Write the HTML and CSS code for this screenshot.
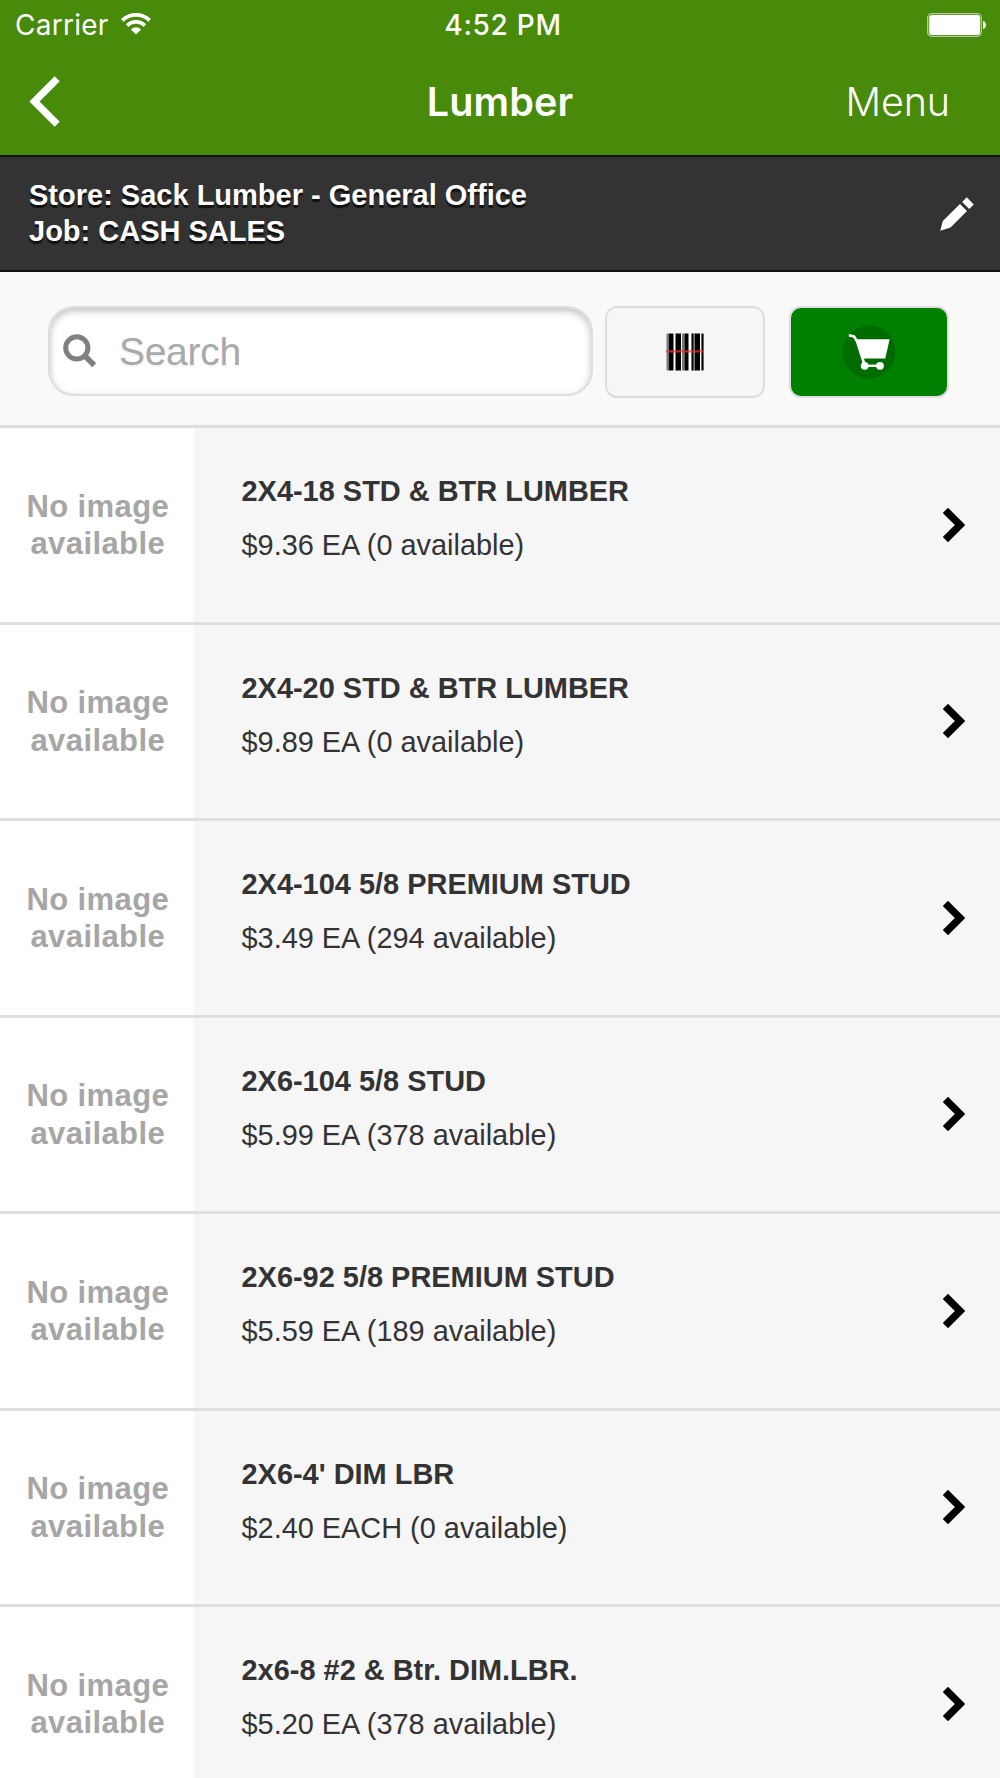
FILE: index.html
```html
<!DOCTYPE html>
<html lang="en">
<head>
<meta charset="utf-8">
<title>Lumber</title>
<link rel="stylesheet" href="styles.css">
</head>
<body>
<header class="top">
  <div class="status">
    <div class="carrier"><span>Carrier</span>
      <svg class="wifi" width="30" height="22" viewBox="0 0 30 22"><g fill="none" stroke="#fff" stroke-width="3.8"><path d="M1.3 7.4a19.5 19.5 0 0 1 27.4 0"/><path d="M6.1 12.6a12.6 12.6 0 0 1 17.8 0"/></g><path d="M15 21.5L9.9 16.4a7.3 7.3 0 0 1 10.2 0z" fill="#fff"/></svg>
    </div>
    <span class="time">4:52 PM</span>
    <svg class="battery" width="60" height="24" viewBox="0 0 60 24"><rect x=".7" y=".7" width="53.6" height="22.6" rx="4" fill="none" stroke="#fff" stroke-opacity=".6" stroke-width="1.3"/><rect x="2.2" y="2" width="50.8" height="20" rx="2.5" fill="#fff"/><path d="M56 8c4 1 4 7 0 8z" fill="#fff"/></svg>
  </div>
  <nav class="nav">
    <svg class="back" width="31" height="51" viewBox="0 0 31 51"><path d="M28.2 2.8L5.5 25.5l22.7 22.7" fill="none" stroke="#fff" stroke-width="7.2"/></svg>
    <h1 class="heading">Lumber</h1>
    <span class="menu">Menu</span>
  </nav>
</header>
<section class="store">
  <div class="store-text"><div>Store: Sack Lumber - General Office</div><div>Job: CASH SALES</div></div>
  <svg class="pencil" width="34" height="34" viewBox="0 0 34 34" fill="#fff"><path d="M20 7l7 7-16.5 16.5L.2 33.7l2.6-9.8zM22.2 5L26.7.3l7.1 7.1-4.6 4.6z"/></svg>
</section>
<section class="tools">
  <label class="search">
    <svg width="34" height="34" viewBox="0 0 34 34" fill="none" stroke="#808080"><circle cx="13.8" cy="13.8" r="11.1" stroke-width="5"/><path d="M21 21l10.2 10.2" stroke-width="5.6"/></svg>
    <input type="text" placeholder="Search">
  </label>
  <button class="scan" aria-label="Scan">
    <svg width="40" height="40" viewBox="0 0 40 40"><path fill="#fff" d="M1 1h38v38H1z"/><path fill="#777" d="M1.5 1.5h2.5v37H1.5zM17 1.5h3.3v37H17zM26 1.5h4.5v37H26z"/><path fill="#000" d="M4 1.5h4.5v37H4zM10.5 1.5h5.5v37h-5.5zM19.8 1.5h3.7v37h-3.7zM27 1.5h1.3v37H27zM30 1.5h5v37h-5zM36.4 1.5h2.2v37h-2.2z"/><path fill="#e33" fill-opacity=".7" d="M1 18.2h38v2.4H1z"/></svg>
  </button>
  <button class="cart" aria-label="Cart">
    <svg width="54" height="54" viewBox="0 0 54 54"><circle cx="27" cy="27" r="26.5" fill="#006c00"/><path d="M6.8 10.2l5.2 1.2 3 5L22 38" fill="none" stroke="#fff" stroke-width="2.6"/><path d="M13.6 14.3h34l-4.3 19.2H20.2z" fill="#fff"/><path d="M22 40.8h16" stroke="#fff" stroke-width="2.4"/><circle cx="22.7" cy="40.8" r="3.9" fill="#fff"/><circle cx="38" cy="40.8" r="3.9" fill="#fff"/></svg>
  </button>
</section>
<main class="list">
  <article class="row"><div class="thumb">No image<br>available</div><div class="info"><h2 class="name">2X4-18 STD &amp; BTR LUMBER</h2><p class="price">$9.36 EA (0 available)</p></div><svg class="go" width="22" height="34" viewBox="0 0 22 34"><path d="M2.4 2.4L17 17 2.4 31.6" fill="none" stroke="#000" stroke-width="7.4"/></svg></article>
  <article class="row"><div class="thumb">No image<br>available</div><div class="info"><h2 class="name">2X4-20 STD &amp; BTR LUMBER</h2><p class="price">$9.89 EA (0 available)</p></div><svg class="go" width="22" height="34" viewBox="0 0 22 34"><path d="M2.4 2.4L17 17 2.4 31.6" fill="none" stroke="#000" stroke-width="7.4"/></svg></article>
  <article class="row"><div class="thumb">No image<br>available</div><div class="info"><h2 class="name">2X4-104 5/8 PREMIUM STUD</h2><p class="price">$3.49 EA (294 available)</p></div><svg class="go" width="22" height="34" viewBox="0 0 22 34"><path d="M2.4 2.4L17 17 2.4 31.6" fill="none" stroke="#000" stroke-width="7.4"/></svg></article>
  <article class="row"><div class="thumb">No image<br>available</div><div class="info"><h2 class="name">2X6-104 5/8 STUD</h2><p class="price">$5.99 EA (378 available)</p></div><svg class="go" width="22" height="34" viewBox="0 0 22 34"><path d="M2.4 2.4L17 17 2.4 31.6" fill="none" stroke="#000" stroke-width="7.4"/></svg></article>
  <article class="row"><div class="thumb">No image<br>available</div><div class="info"><h2 class="name">2X6-92 5/8 PREMIUM STUD</h2><p class="price">$5.59 EA (189 available)</p></div><svg class="go" width="22" height="34" viewBox="0 0 22 34"><path d="M2.4 2.4L17 17 2.4 31.6" fill="none" stroke="#000" stroke-width="7.4"/></svg></article>
  <article class="row"><div class="thumb">No image<br>available</div><div class="info"><h2 class="name">2X6-4' DIM LBR</h2><p class="price">$2.40 EACH (0 available)</p></div><svg class="go" width="22" height="34" viewBox="0 0 22 34"><path d="M2.4 2.4L17 17 2.4 31.6" fill="none" stroke="#000" stroke-width="7.4"/></svg></article>
  <article class="row"><div class="thumb">No image<br>available</div><div class="info"><h2 class="name">2x6-8 #2 &amp; Btr. DIM.LBR.</h2><p class="price">$5.20 EA (378 available)</p></div><svg class="go" width="22" height="34" viewBox="0 0 22 34"><path d="M2.4 2.4L17 17 2.4 31.6" fill="none" stroke="#000" stroke-width="7.4"/></svg></article>
</main>
</body>
</html>
```
FILE: styles.css
```css
* { box-sizing: border-box; }
html, body { margin: 0; height: 1778px; overflow: hidden; }
body {
  width: 1000px;
  background: #f9f9f9;
  color: #333;
  font-family: "Liberation Sans", Arial, sans-serif;
}
svg { display: block; flex: none; }
h1, h2, p { margin: 0; }

.top { height: 155px; background: #488a0a; color: #fff; font-family: Inter, sans-serif; }
.status {
  display: grid;
  grid-template-columns: 1fr auto 1fr;
  align-items: center;
  height: 50px;
  padding: 0 13px 0 15px;
  font-size: 28px;
}
.carrier { display: flex; align-items: center; gap: 12px; letter-spacing: 0.25px; }
.wifi { margin-bottom: 3px; }
.time { font-weight: 500; letter-spacing: 0.7px; padding-left: 4px; }
.battery { justify-self: end; }
.nav {
  display: grid;
  grid-template-columns: 1fr auto 1fr;
  align-items: center;
  height: 103px;
  padding: 0 50px 0 29px;
  font-size: 39.5px;
}
.heading { font-size: 39.5px; font-weight: 600; letter-spacing: 0.1px; margin-left: 21px; }
.menu { justify-self: end; font-weight: 300; letter-spacing: -0.1px; }

.store {
  display: flex;
  justify-content: space-between;
  align-items: center;
  height: 117px;
  padding: 0 26px 0 29px;
  background: #333;
  border-top: 2px solid #111;
  border-bottom: 2px solid #111;
  color: #fff;
  font-size: 29px;
  font-weight: 700;
  line-height: 36px;
  text-shadow: 0 3px 1px #111;
}
.store-text { padding-bottom: 2px; }

.tools {
  display: flex;
  align-items: flex-start;
  height: 153px;
  padding: 34px 0 0 48px;
}
.search {
  display: flex;
  align-items: center;
  gap: 22px;
  width: 545px;
  height: 90px;
  padding: 0 13px;
  background: #fff;
  border: 2px solid #ddd;
  border-radius: 26px;
  box-shadow: inset 0 3px 7px rgba(0, 0, 0, 0.25);
}
.search input {
  flex: 1;
  min-width: 0;
  padding: 2px 0 0;
  border: 0;
  outline: 0;
  background: none;
  font: 39px "Liberation Sans", Arial, sans-serif;
  letter-spacing: -0.3px;
  text-shadow: 0 2px 0 #f3f3f3;
}
.search svg { margin-bottom: 1px; }
.search input::placeholder { color: #a9a9a9; opacity: 1; }
.scan, .cart {
  display: flex;
  align-items: center;
  justify-content: center;
  width: 160px;
  height: 92px;
  padding: 0;
  border: 2px solid #ddd;
  border-radius: 12px;
  background: #f6f6f6;
}
.scan { margin-left: 12px; }
.cart { margin-left: 24px; background: #008000; }

.row {
  display: flex;
  align-items: flex-start;
  height: 196.58px;
  border-top: 3px solid #dedede;
  background: #f6f6f6;
}
.thumb {
  width: 193.5px;
  height: 100%;
  padding: 59.5px 0 0 2px;
  background: #fff;
  color: #a6a6a6;
  text-align: center;
  font-size: 31px;
  font-weight: 700;
  letter-spacing: 0.4px;
  line-height: 37.5px;
}
.info { flex: 1; padding: 45px 0 0 48px; }
.name { font-size: 28.95px; font-weight: 700; line-height: 36px; }
.price { margin-top: 18px; font-size: 28.9px; line-height: 36px; }
.go { margin: 79.5px 35px 0 0; }
```
